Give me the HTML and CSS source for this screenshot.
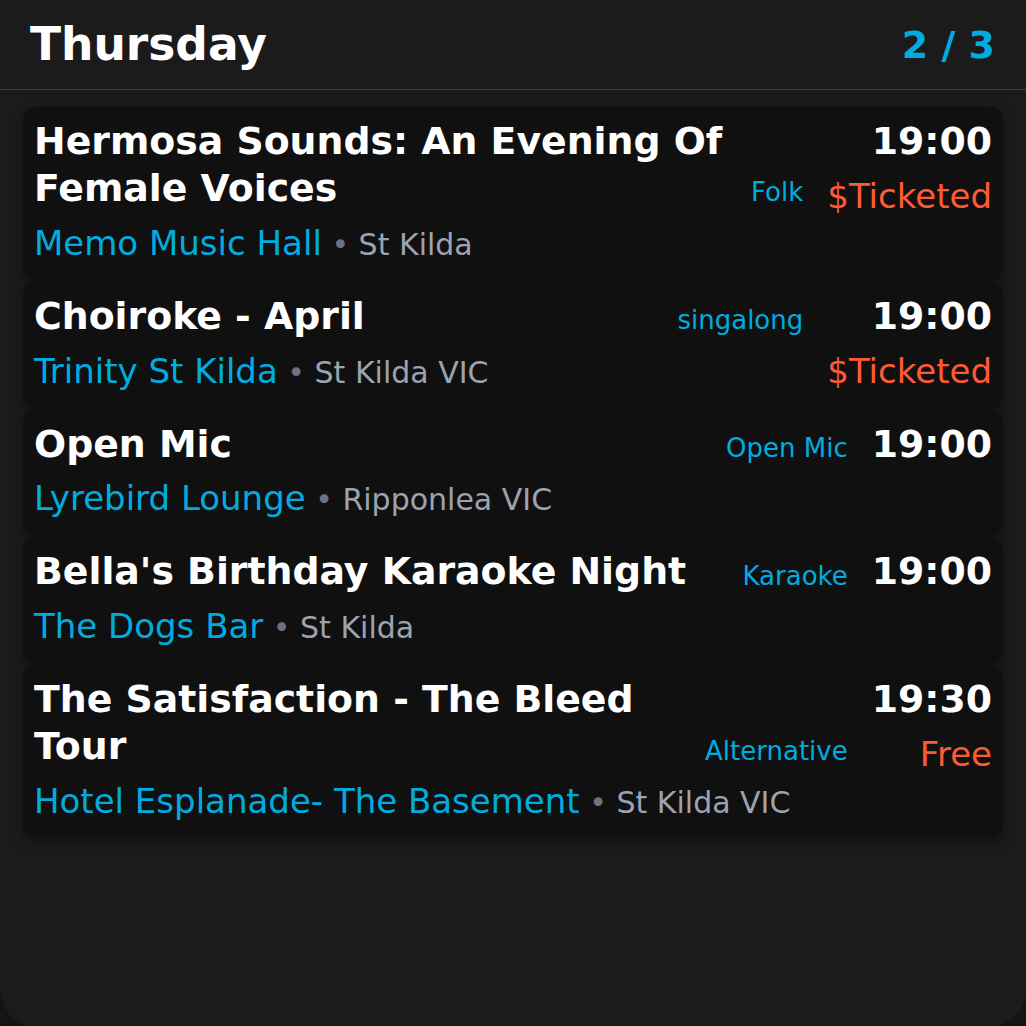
FILE: index.html
```html
<!DOCTYPE html>
<html lang="en">
<head>
<meta charset="utf-8">
<title>Thursday</title>
<link rel="stylesheet" href="styles.css">
</head>
<body>
<div class="panel">
  <header class="header">
    <h1 class="day">Thursday</h1>
    <div class="counter">2 / 3</div>
  </header>
  <main class="list">
    <article class="card">
      <h2 class="title">Hermosa Sounds: An Evening Of Female Voices</h2>
      <span class="genre">Folk</span>
      <div class="when">
        <div class="time">19:00</div>
        <div class="price">$Ticketed</div>
      </div>
      <div class="place"><span class="venue">Memo Music Hall</span><span class="loc"> <span class="dot">•</span> St Kilda</span></div>
    </article>
    <article class="card">
      <h2 class="title">Choiroke - April</h2>
      <span class="genre">singalong</span>
      <div class="when">
        <div class="time">19:00</div>
        <div class="price">$Ticketed</div>
      </div>
      <div class="place"><span class="venue">Trinity St Kilda</span><span class="loc"> <span class="dot">•</span> St Kilda VIC</span></div>
    </article>
    <article class="card">
      <h2 class="title">Open Mic</h2>
      <span class="genre">Open Mic</span>
      <div class="when">
        <div class="time">19:00</div>
      </div>
      <div class="place"><span class="venue">Lyrebird Lounge</span><span class="loc"> <span class="dot">•</span> Ripponlea VIC</span></div>
    </article>
    <article class="card">
      <h2 class="title">Bella's Birthday Karaoke Night</h2>
      <span class="genre">Karaoke</span>
      <div class="when">
        <div class="time">19:00</div>
      </div>
      <div class="place"><span class="venue">The Dogs Bar</span><span class="loc"> <span class="dot">•</span> St Kilda</span></div>
    </article>
    <article class="card">
      <h2 class="title">The Satisfaction - The Bleed Tour</h2>
      <span class="genre">Alternative</span>
      <div class="when">
        <div class="time">19:30</div>
        <div class="price">Free</div>
      </div>
      <div class="place"><span class="venue">Hotel Esplanade- The Basement</span><span class="loc"> <span class="dot">•</span> St Kilda VIC</span></div>
    </article>
  </main>
</div>
</body>
</html>
```
FILE: styles.css
```css
* { box-sizing: border-box; }
html, body {
  margin: 0;
  padding: 0;
  background: #141414;
  font-family: "DejaVu Sans", "Noto Sans", sans-serif;
  color: #ffffff;
}
.panel {
  width: 1026px;
  height: 1026px;
  background: #1b1b1b;
  border-radius: 0 0 36px 36px;
  overflow: hidden;
}
.header {
  display: flex;
  align-items: center;
  justify-content: space-between;
  padding: 18px 31px 17px 30px;
  border-bottom: 1px solid #383e48;
}
.day {
  margin: 0;
  font-size: 45.5px;
  font-weight: bold;
  line-height: 54px;
  color: #ffffff;
}
.counter {
  font-size: 38px;
  font-weight: bold;
  line-height: 43px;
  color: #00acdf;
}
.list {
  display: flex;
  flex-direction: column;
  gap: 2px;
  padding: 17px 23px 0;
}
.card {
  display: grid;
  grid-template-columns: 1fr auto auto;
  grid-template-rows: auto auto;
  column-gap: 24px;
  padding: 11px 11px 11px;
  background: #101010;
  border-radius: 12px;
  box-shadow: 0 4px 12px rgba(0, 0, 0, 0.35);
}
.title {
  grid-column: 1;
  grid-row: 1;
  margin: 0;
  font-size: 37.8px;
  line-height: 1.24;
  font-weight: bold;
  color: #ffffff;
}
.genre {
  grid-column: 2;
  grid-row: 1;
  align-self: end;
  font-size: 26px;
  line-height: 38.5px;
  color: #00acdf;
  white-space: nowrap;
}
.when {
  grid-column: 3;
  grid-row: 1 / span 2;
  align-self: start;
  text-align: right;
}
.time {
  font-size: 37.8px;
  line-height: 1.24;
  font-weight: bold;
  color: #ffffff;
}
.price {
  margin-top: 6px;
  font-size: 34px;
  line-height: 1.5;
  color: #ff5a36;
  white-space: nowrap;
}
.place {
  grid-column: 1 / span 2;
  grid-row: 2;
  margin-top: 6px;
  font-size: 34px;
  line-height: 1.5;
  white-space: nowrap;
}
.venue { color: #00acdf; }
.loc {
  font-size: 30px;
  color: #9ca3af;
}
.dot { color: #6b7280; }
```
